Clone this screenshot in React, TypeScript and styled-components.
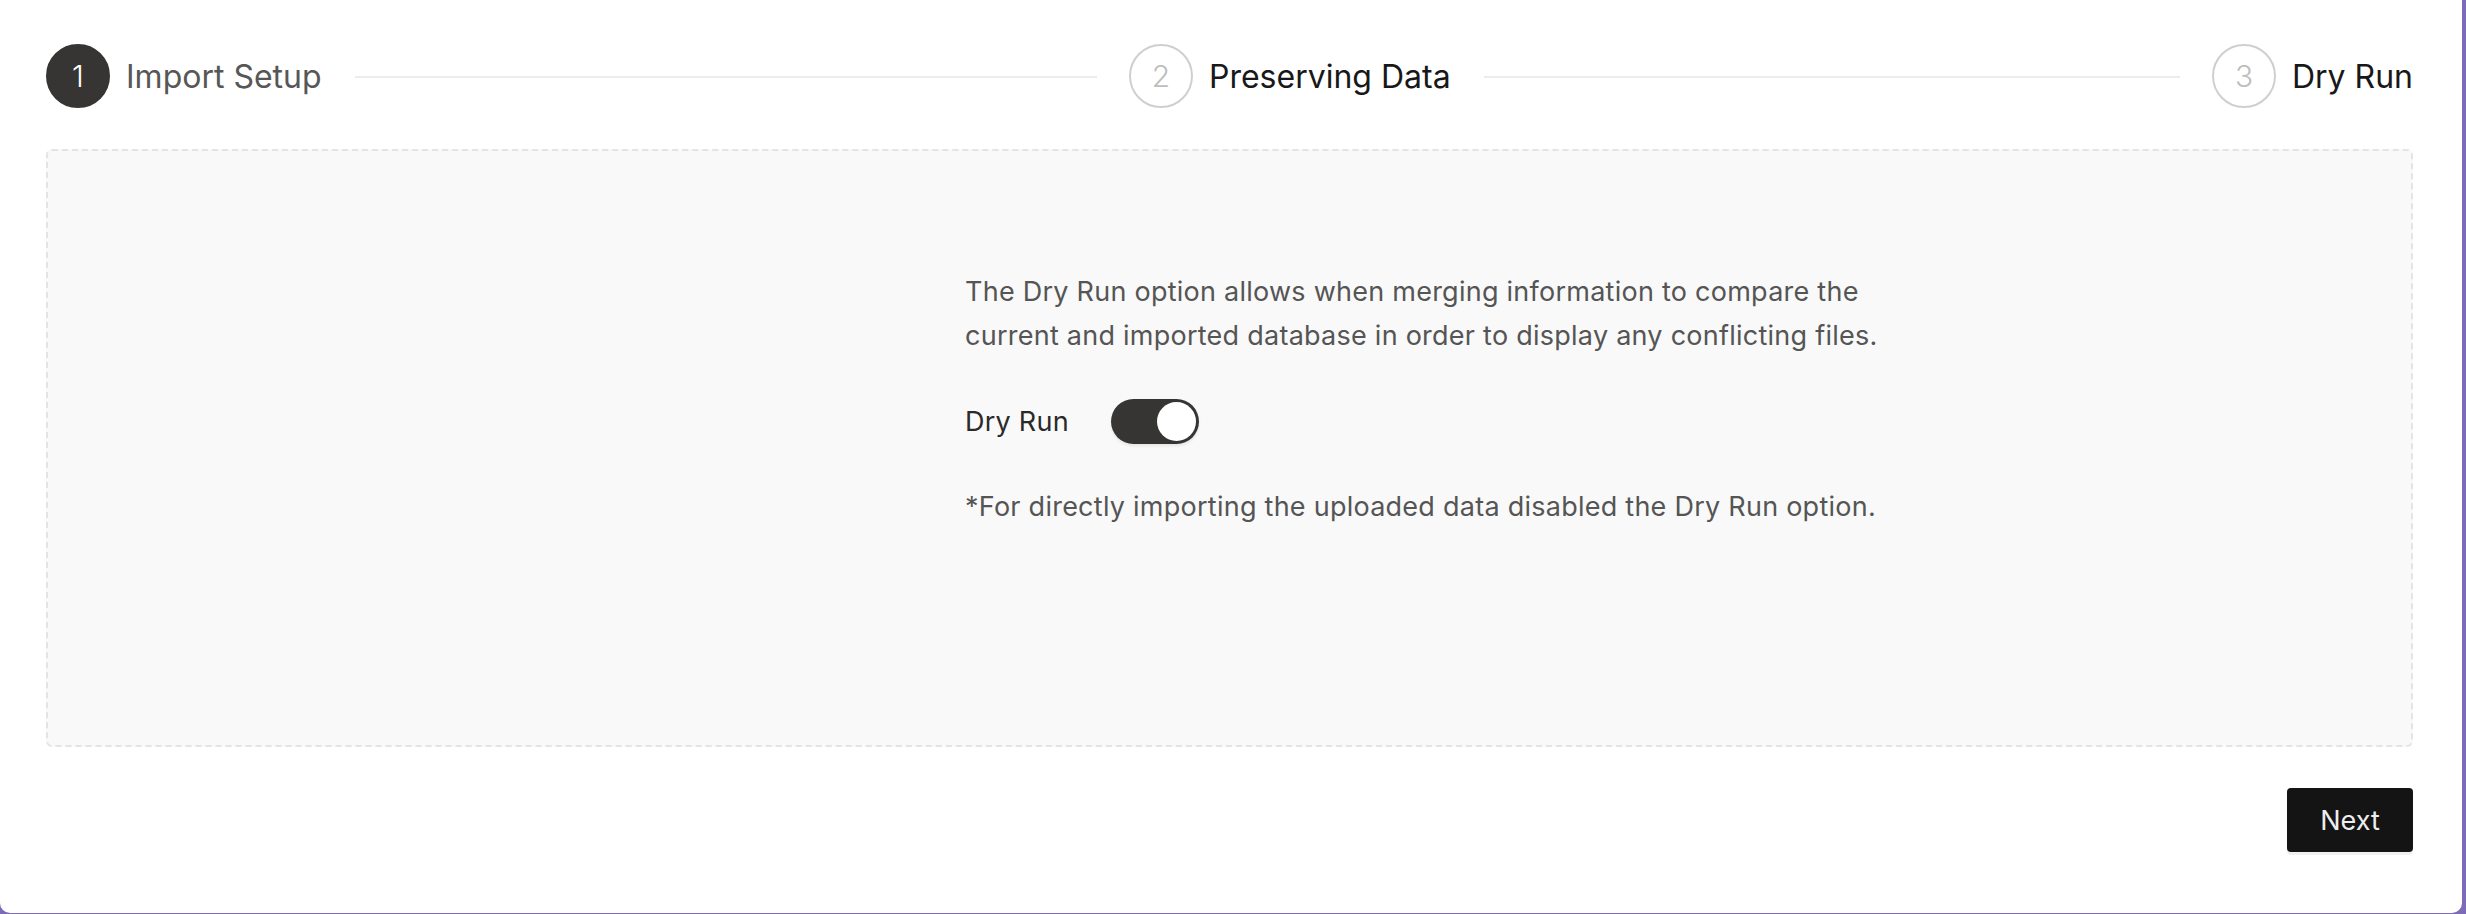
import React, { useState } from 'react'
import styled, { createGlobalStyle } from 'styled-components'

type StepState = 'done' | 'current' | 'todo'

type Step = {
  label: string
  state: StepState
}

const steps: Step[] = [
  { label: 'Import Setup', state: 'done' },
  { label: 'Preserving Data', state: 'current' },
  { label: 'Dry Run', state: 'todo' },
]

const App: React.FC = () => {
  const [dryRun, setDryRun] = useState(true)

  return (
    <>
      <GlobalStyle />
      <Card>
        <Stepper>
          {steps.map((s, i) => {
            const last = i === steps.length - 1

            return (
              <StepItem key={s.label} last={last}>
                <StepCircle state={s.state}>{i + 1}</StepCircle>
                <StepLabel state={s.state}>{s.label}</StepLabel>
                {!last && <Connector />}
              </StepItem>
            )
          })}
        </Stepper>

        <DropArea>
          <Content>
            <Description>
              The Dry Run option allows when merging information to compare the
              <br />
              current and imported database in order to display any conflicting files.
            </Description>
            <ToggleRow>
              <ToggleLabel>Dry Run</ToggleLabel>
              <Switch
                type="button"
                role="switch"
                aria-checked={dryRun}
                on={dryRun}
                onClick={() => setDryRun(v => !v)}
              >
                <Knob />
              </Switch>
            </ToggleRow>
            <Note>*For directly importing the uploaded data disabled the Dry Run option.</Note>
          </Content>
        </DropArea>

        <Footer>
          <NextButton type="button">Next</NextButton>
        </Footer>
      </Card>
    </>
  )
}

const GlobalStyle = createGlobalStyle`
  html, body {
    margin: 0;
    padding: 0;
    background: #7e6bb8;
  }
  body {
    font-family: Inter, "Liberation Sans", sans-serif;
    -webkit-font-smoothing: antialiased;
  }
  * {
    box-sizing: border-box;
  }
`

const Card = styled.div`
  width: 2462px;
  height: 913px;
  background: #ffffff;
  border-radius: 0 0 10px 10px;
  padding: 44px 49px 0 46px;
  display: flex;
  flex-direction: column;
`

const Stepper = styled.div`
  display: flex;
  align-items: center;
  height: 64px;
`

const StepItem = styled.div<{ last: boolean }>`
  display: flex;
  align-items: center;
  flex: ${p => (p.last ? '0 0 auto' : '1 1 0')};
`

const StepCircle = styled.div<{ state: StepState }>`
  width: 64px;
  height: 64px;
  flex-shrink: 0;
  border-radius: 50%;
  display: flex;
  align-items: center;
  justify-content: center;
  font-size: 30px;
  font-weight: 300;
  background: ${p => (p.state === 'done' ? '#363533' : 'transparent')};
  color: ${p => (p.state === 'done' ? '#ffffff' : '#bdbdbd')};
  border: 2px solid ${p => (p.state === 'done' ? '#363533' : '#cfcfcf')};
`

const StepLabel = styled.span<{ state: StepState }>`
  margin-left: 16px;
  font-size: 32px;
  font-weight: 400;
  color: ${p => (p.state === 'done' ? '#575757' : '#181818')};
  white-space: nowrap;
`

const Connector = styled.div`
  flex: 1;
  height: 2px;
  margin: 2px 32px 0 33px;
  background: #ececec;
`

const DropArea = styled.div`
  margin-top: 41px;
  height: 598px;
  background: #f9f9f9;
  border: 2px dashed #e4e4e4;
  border-radius: 6px;
  padding: 119px 0 0 917px;
`

const Content = styled.div`
  display: flex;
  flex-direction: column;
  color: #555555;
  font-size: 27px;
  letter-spacing: 0.25px;
  line-height: 44px;
`

const Description = styled.p`
  margin: 0;
`

const ToggleRow = styled.div`
  display: flex;
  align-items: center;
  gap: 42px;
  margin-top: 41px;
  height: 45px;
`

const ToggleLabel = styled.span`
  color: #2a2a2a;
`

const Switch = styled.button<{ on: boolean }>`
  width: 88px;
  height: 45px;
  border-radius: 23px;
  border: none;
  padding: 3px;
  cursor: pointer;
  display: flex;
  align-items: center;
  justify-content: ${p => (p.on ? 'flex-end' : 'flex-start')};
  background: ${p => (p.on ? '#363533' : '#d6d6d6')};
  box-shadow: 0 2px 3px rgba(0, 0, 0, 0.08);
`

const Knob = styled.span`
  width: 39px;
  height: 39px;
  border-radius: 50%;
  background: #ffffff;
`

const Note = styled.p`
  margin: 41px 0 0;
`

const Footer = styled.div`
  display: flex;
  justify-content: flex-end;
  margin-top: 41px;
`

const NextButton = styled.button`
  width: 126px;
  height: 64px;
  border: none;
  border-radius: 4px;
  background: #141414;
  color: #eeeeee;
  font-family: Inter, "Liberation Sans", sans-serif;
  font-size: 27px;
  cursor: pointer;
  box-shadow: 0 3px 0 #f0f0f0;
`

export default App
